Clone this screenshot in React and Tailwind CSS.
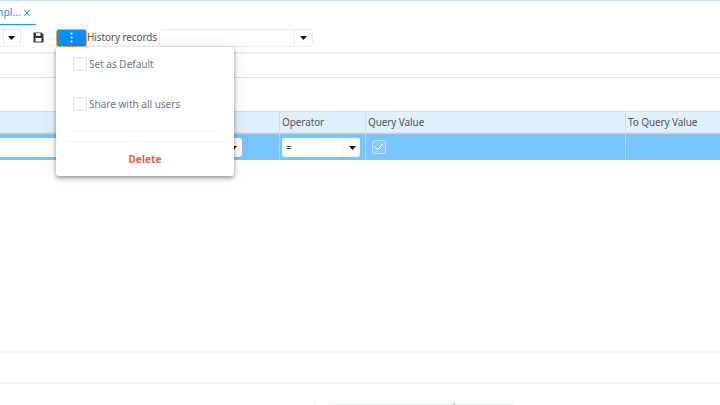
import React from 'react';
import { Check, X } from 'lucide-react';

const font = { fontFamily: '"Noto Sans", sans-serif' };

const Caret = ({ className = '' }) => (
  <svg width="7" height="4" viewBox="0 0 7 4" className={className}>
    <path d="M0 0h7L3.5 4z" fill="#111" />
  </svg>
);

const SaveIcon = () => (
  <svg width="11" height="11" viewBox="0 0 11 11">
    <path d="M0.5 0.5h8l2 2v8h-10z" fill="#333" />
    <rect x="3" y="1.2" width="4.5" height="2.6" fill="#fff" />
    <rect x="2.5" y="6" width="6" height="3.6" fill="#fff" />
  </svg>
);

const Box = ({ children, className = '' }) => (
  <span className={`flex h-[14px] w-[14px] shrink-0 items-center justify-center rounded-[3px] border ${className}`}>
    {children}
  </span>
);

const HeadCell = ({ className = '', children }) => (
  <div className={`flex h-full items-center border-r border-[#d8dcdf] pl-[2px] pt-[1px] text-[10px] tracking-[-0.1px] text-[#555] ${className}`}>
    {children}
  </div>
);

// menu aperto sopra la griglia
const PopMenu = () => (
  <div className="absolute left-[56px] top-[47px] flex h-[129px] w-[178px] flex-col rounded-[3px] bg-white pt-[10px] shadow-[0_2px_4px_rgba(0,0,0,0.4),0_0_20px_rgba(0,0,0,0.08)]">
    <div className="flex h-[14px] items-center gap-[2px] pl-[17px] text-[10px] text-[#6b7785]">
      <Box className="border-[#dcdcdc]" />
      <span className="pt-[1px]">Set as Default</span>
    </div>
    <div className="mt-[26px] flex h-[14px] items-center gap-[2px] pl-[17px] text-[10px] text-[#6b7785]">
      <Box className="border-[#dcdcdc]" />
      <span>Share with all users</span>
    </div>
    <div className="mx-[14px] mt-[20px] border-t border-[#f4f4f4]" />
    <div className="mt-[9px] border-t border-[#f2f2f2]" />
    <div className="flex flex-1 items-center justify-center text-[10px] font-bold tracking-[0.1px] text-[#e8604c]">
      Delete
    </div>
  </div>
);

export default function App() {
  return (
    <div style={font} className="relative flex h-[405px] w-[720px] flex-col overflow-hidden bg-white">
      <div className="h-[1px] bg-[#bfe5ff]" />

      {/* tab */}
      <div className="flex h-[24px]">
        <div className="flex h-full w-[36px] items-center justify-end gap-[1px] border-b-[1.5px] border-[#1e90ff] pr-[4px] pt-[1px] text-[10.5px] text-[#1e90ff]">
          <span className="whitespace-nowrap">mpl...</span>
          <X size={10} strokeWidth={2.5} className="shrink-0" />
        </div>
      </div>

      {/* toolbar */}
      <div className="flex h-[29px] items-center border-b-2 border-[#f0f0f0] pb-[2px]">
        <div className="flex h-[18px] w-[21px] items-center rounded-r-[3px] border border-l-0 border-[#ececec]">
          <div className="h-full w-[4px] border-r border-[#ececec]" />
          <Caret className="ml-[4px]" />
        </div>
        <div className="ml-[12px] flex w-[11px]">
          <SaveIcon />
        </div>
        <button className="ml-[12px] flex h-[18px] w-[31px] items-center justify-center rounded-[3px] border-[1.5px] border-[#f2a93b] bg-[#0a90ff]">
          <svg width="3" height="11" viewBox="0 0 3 11">
            <circle cx="1.5" cy="1.5" r="1.1" fill="#fff" />
            <circle cx="1.5" cy="5.5" r="1.1" fill="#fff" />
            <circle cx="1.5" cy="9.5" r="1.1" fill="#fff" />
          </svg>
        </button>
        <span className="w-[70px] whitespace-nowrap text-[10px] tracking-[-0.1px] text-[#555]">History records</span>
        <div className="ml-[2px] flex h-[18px] w-[154px] items-center rounded-[3px] border border-[#ececec]">
          <div className="h-full flex-1 border-r border-[#ececec]" />
          <div className="flex w-[17px] justify-center">
            <Caret />
          </div>
        </div>
      </div>

      <div className="h-[24px] border-b border-[#e2e2e2]" />
      <div className="h-[33px]" />

      {/* griglia */}
      <div className="flex h-[22px] border-y border-[#dcdfe2] bg-[#e0f0ff]">
        <HeadCell className="w-[280px]" />
        <HeadCell className="w-[86px]">Operator</HeadCell>
        <HeadCell className="w-[260px]">Query Value</HeadCell>
        <div className="flex h-full items-center pl-[2px] pt-[1px] text-[10px] tracking-[-0.1px] text-[#555]">To Query Value</div>
      </div>
      <div className="flex h-[27px] border-t border-[#cfd6da] bg-[#7ac4ff]">
        <div className="flex h-full w-[280px] items-center border-r border-[#a8d6f8] pt-[1px]">
          <div className="flex h-[19px] w-[242px] items-center justify-end rounded-r-[3px] bg-white pr-[5px]">
            <Caret />
          </div>
        </div>
        <div className="flex h-full w-[86px] items-center border-r border-[#a8d6f8] pl-[2px] pt-[1px]">
          <div className="flex h-[19px] w-[78px] items-center rounded-[3px] bg-white pl-[4px] text-[10px] text-[#444]">
            <span className="flex-1">=</span>
            <span className="flex h-full w-[17px] items-center justify-center border-l border-[#f6f6f6]">
              <Caret />
            </span>
          </div>
        </div>
        <div className="flex h-full w-[260px] items-center border-r border-[#a8d6f8] pl-[6px]">
          <Box className="border-[#c6e2f8] bg-white/10">
            <Check size={14} strokeWidth={2} color="#fff" />
          </Box>
        </div>
      </div>

      <div className="flex-1" />

      <div className="h-[33px] border-y-2 border-[#efefef]" />
      <div className="flex h-[21px] items-end pl-[314px]">
        <div className="h-[2px] w-[16px] border-l border-[#eeeeee]" />
        <div className="relative h-[2px] w-[183px] bg-[#f2f6fa]">
          <span className="absolute left-[123px] top-0 h-[2px] w-[2px] bg-[#d9c3a8]" />
        </div>
      </div>

      <PopMenu />
    </div>
  );
}
